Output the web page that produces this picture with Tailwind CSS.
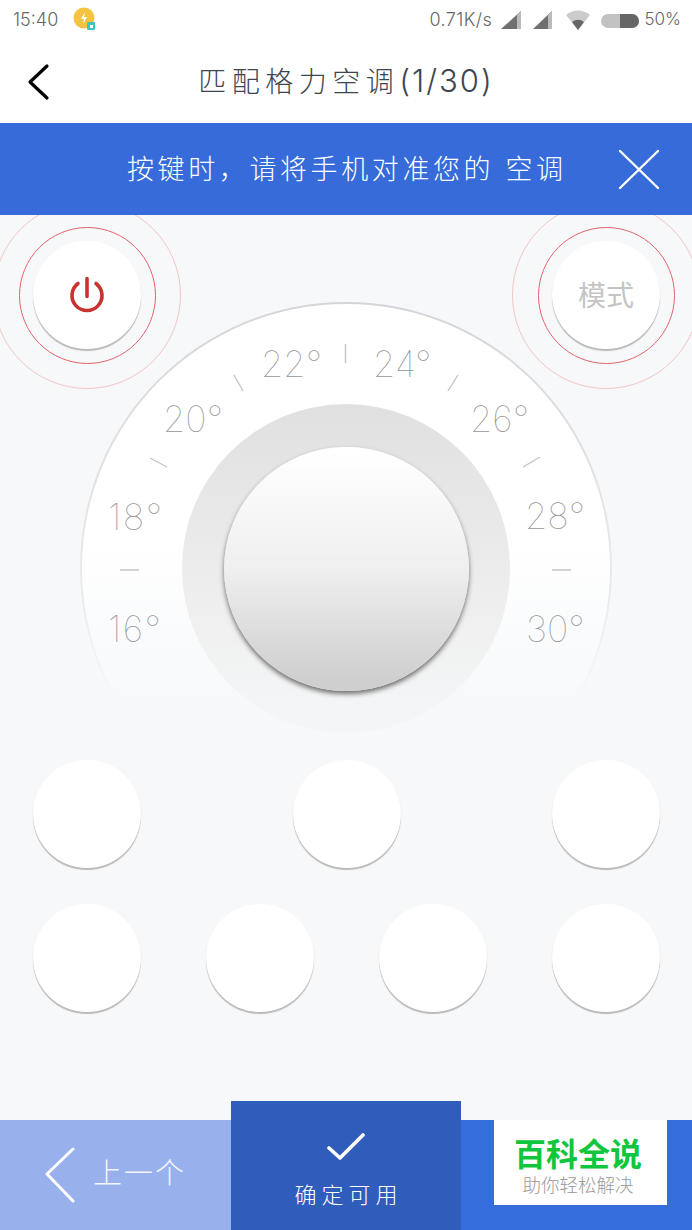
<!DOCTYPE html>
<html lang="zh">
<head>
<meta charset="utf-8">
<script src="https://cdn.jsdelivr.net/npm/@tailwindcss/browser@4"></script>
</head>
<body class="w-[692px] h-[1230px] overflow-hidden bg-[#f6f8fa] font-['Inter','Noto_Sans_CJK_SC',sans-serif]">
<div class="w-[692px] h-[1230px] flex flex-col">
  <!-- status bar -->
  <div class="h-[38px] bg-white flex items-center justify-between pl-[13px] pr-[11px] text-[#666] text-[17px] font-light">
    <div class="flex items-center gap-[15px]">
      <span class="text-[18px]">15:40</span>
      <svg width="24" height="24" viewBox="0 0 24 24"><circle cx="11" cy="11" r="10.5" fill="#f5c242"/><path d="M12 5l-4 7h3l-1 5 4-7h-3z" fill="#fff"/><rect x="14" y="15" width="8" height="8" rx="1" fill="#3fc6c4"/><rect x="17" y="18" width="3" height="3" fill="#fff"/></svg>
    </div>
    <div class="flex items-center">
      <span class="w-[72px] text-[18px] tracking-[0.4px]">0.71K/s</span>
      <svg width="139" height="24" viewBox="0 0 139 24">
        <path d="M0 22 20 4v18z" fill="#707070"/><path d="M16 8v14h4V4z" fill="#bbb"/>
        <path d="M32 22 51 4v18z" fill="#707070"/><path d="M47 8v14h4V4z" fill="#bbb"/>
        <path d="M65 8a18 18 0 0 1 24 0l-12 15z" fill="#ccc"/><path d="M71 15a9 9 0 0 1 12 0l-6 8z" fill="#666"/>
        <rect x="100" y="7" width="38" height="14" rx="7" fill="#c2c2c2"/><path d="M119 7h12a7 7 0 0 1 0 14h-12z" fill="#666"/>
      </svg>
      <span class="ml-[4px] pt-[1px]">50%</span>
    </div>
  </div>
  <!-- title bar -->
  <div class="h-[85px] bg-white relative flex items-center justify-center">
    <svg class="absolute left-[26px] top-[25px]" width="26" height="38" viewBox="0 0 26 38" fill="none" stroke="#000" stroke-width="3.2" stroke-linecap="round" stroke-linejoin="round"><path d="M21 3 4 19l17 16"/></svg>
    <div class="flex items-center text-[#3d4650] font-light pt-[2px]">
      <span class="text-[28px] tracking-[5.500px]">匹配格力空调</span>
      <span class="text-[31px] tracking-[2px]">(1/30)</span>
    </div>
  </div>
  <!-- hint bar -->
  <div class="h-[92px] bg-[#366bd9] relative flex items-center pl-[127px] pt-[3px] text-white text-[27px] font-light">
    <span class="tracking-[3.600px]">按键时，请将手机对准您的 空调</span>
    <svg class="absolute left-[618px] top-[26px]" width="42" height="41" viewBox="0 0 42 41" fill="none" stroke="#fff" stroke-width="2.4" stroke-linecap="round"><path d="M2 2l38 37M40 2 2 39"/></svg>
  </div>
  <!-- remote -->
  <div class="flex-1 relative overflow-hidden">
    <div class="flex justify-between pl-[33px] pr-[32px] pt-[26px] relative z-10">
      <div class="relative w-[108px] h-[108px] rounded-full bg-white shadow-[0_2px_1px_#b9b9b9] flex items-center justify-center">
        <div class="absolute -inset-[14.500px] rounded-full border border-[#e4636b]"></div>
        <div class="absolute -inset-[40px] rounded-full border border-[#f3c6c9]"></div>
        <svg width="40" height="40" viewBox="0 0 40 40" fill="none" stroke="#c8322f" stroke-width="3.6" stroke-linecap="round"><path d="M11 8.500a15 15 0 1 0 18 0M20 3.500v18"/></svg>
      </div>
      <div class="relative w-[108px] h-[108px] rounded-full bg-white shadow-[0_2px_1px_#b9b9b9] flex items-center justify-center">
        <div class="absolute -inset-[14.500px] rounded-full border border-[#e4636b]"></div>
        <div class="absolute -inset-[40px] rounded-full border border-[#f3c6c9]"></div>
        <span class="text-[#c4c4c4] text-[28px] pt-[2px]">模式</span>
      </div>
    </div>
    <!-- dial: free canvas of 532 x 431 whose origin is at page (80,303) -->
    <div class="relative w-[532px] h-[431px] mx-auto -mt-[47px] text-[#969696] text-[36px] font-thin leading-none">
      <div class="absolute inset-0 overflow-hidden">
        <div class="w-[532px] h-[532px] rounded-full bg-gradient-to-b from-[#d3d5d8] from-0% via-[#e9ebed] via-55% to-[#f6f8fa] to-75% p-[2px]">
          <div class="w-full h-full rounded-full bg-gradient-to-b from-white from-45% to-[#f6f8fa] to-76%"></div>
        </div>
      </div>
      <svg class="absolute left-0 top-0" width="532" height="431" viewBox="0 0 532 431" fill="none" stroke="#c4c4c4" stroke-width="1.4">
        <path d="M265.500 42v19M154 73l9 16M70 156l17 9M368 89l10-16M443 165l17-10M40 268h19M472 268h19"/>
      </svg>
      <span class="absolute left-[181px] top-[44px]">22°</span>
      <span class="absolute left-[293px] top-[44px]">24°</span>
      <span class="absolute left-[83px] top-[99px]">20°</span>
      <span class="absolute left-[390px] top-[99px]">26°</span>
      <span class="absolute left-[28px] top-[197px] tracking-[1.500px]">18°</span>
      <span class="absolute left-[445px] top-[196px]">28°</span>
      <span class="absolute left-[28px] top-[309px] tracking-[1.500px]">16°</span>
      <span class="absolute left-[446px] top-[309px]">30°</span>
      <div class="absolute left-[102px] top-[102px] w-[328px] h-[329px] rounded-full bg-gradient-to-b from-[#e0e0e0] via-[#ececec] via-50% to-[#f4f5f6] to-90% flex items-center justify-center">
        <div class="w-[245px] h-[244px] rounded-full bg-gradient-to-b from-white from-2% via-[#efefef] via-50% to-[#cfcfcf] to-95% shadow-[0_3px_5px_rgba(0,0,0,0.55)]"></div>
      </div>
    </div>
    <!-- blank keys -->
    <div class="flex justify-between pl-[33px] pr-[32px] mt-[27px]">
      <div class="w-[108px] h-[108px] rounded-full bg-white shadow-[0_2px_1px_#b9b9b9]"></div>
      <div class="w-[108px] h-[108px] rounded-full bg-white shadow-[0_2px_1px_#b9b9b9]"></div>
      <div class="w-[108px] h-[108px] rounded-full bg-white shadow-[0_2px_1px_#b9b9b9]"></div>
    </div>
    <div class="flex justify-between pl-[33px] pr-[32px] mt-[36px]">
      <div class="w-[108px] h-[108px] rounded-full bg-white shadow-[0_2px_1px_#b9b9b9]"></div>
      <div class="w-[108px] h-[108px] rounded-full bg-white shadow-[0_2px_1px_#b9b9b9]"></div>
      <div class="w-[108px] h-[108px] rounded-full bg-white shadow-[0_2px_1px_#b9b9b9]"></div>
      <div class="w-[108px] h-[108px] rounded-full bg-white shadow-[0_2px_1px_#b9b9b9]"></div>
    </div>
  </div>
  <!-- footer -->
  <div class="h-[110px] flex text-white font-light">
    <div class="w-[231px] bg-[#98b1ec] flex items-center pl-[44px]">
      <svg width="32" height="56" viewBox="0 0 32 56" fill="none" stroke="#fff" stroke-width="3" stroke-linecap="round" stroke-linejoin="round"><path d="M29 2 3 27l26 27"/></svg>
      <span class="ml-[17px] text-[29px] tracking-[2px] text-[#f2f5fd] pb-[2px]">上一个</span>
    </div>
    <div class="w-[230px] h-[129px] -mt-[19px] bg-[#305cbc] flex flex-col items-center pt-[32px]">
      <svg width="38" height="27" viewBox="0 0 38 27" fill="none" stroke="#fff" stroke-width="3.6" stroke-linecap="round" stroke-linejoin="round"><path d="M2 15l11 10L36 2"/></svg>
      <span class="mt-[19px] text-[22px] tracking-[5px] pl-[5px]">确定可用</span>
    </div>
    <div class="flex-1 bg-[#366ddd] pl-[33px]">
      <div class="w-[173px] h-[85px] bg-white flex flex-col items-center pt-[17px] pr-[5px]">
        <span class="text-[#10c63c] text-[32px] font-bold leading-[36px]">百科全说</span>
        <span class="text-[#999] text-[18.500px] leading-[24px]">助你轻松解决</span>
      </div>
    </div>
  </div>
</div>
</body>
</html>
